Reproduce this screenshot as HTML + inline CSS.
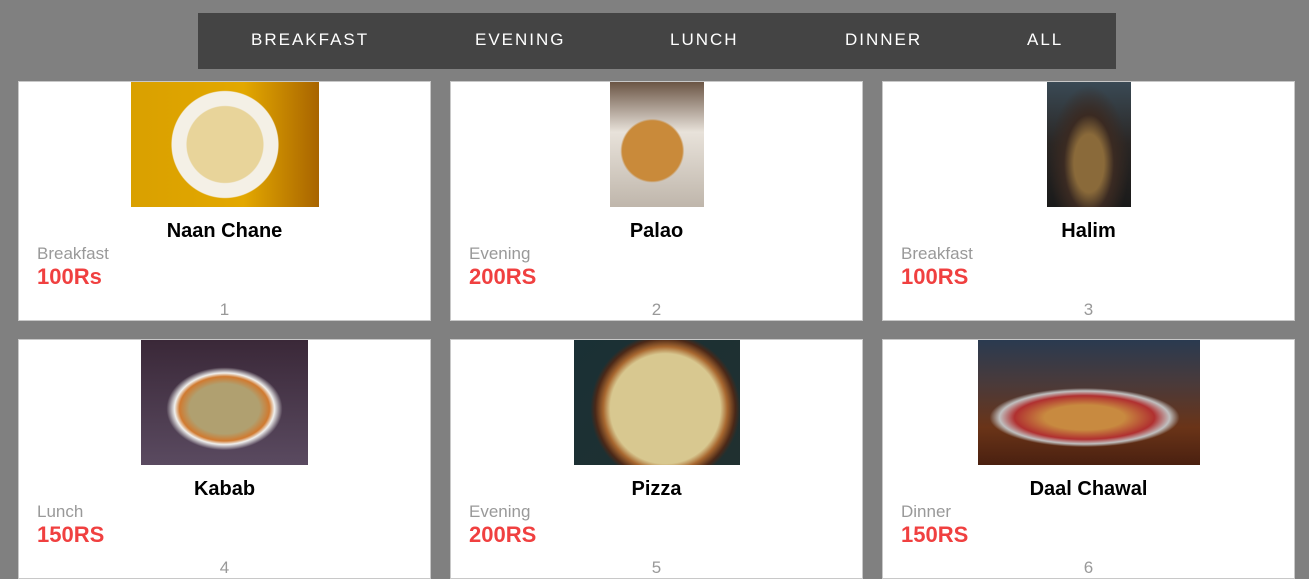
<!DOCTYPE html>
<html><head><style>
body{margin:0;background:#808080;font-family:"Liberation Sans",Arial,sans-serif;width:1309px;height:567px;overflow:hidden;position:relative}
.nav{position:absolute;left:198px;top:13px;width:918px;height:56px;background:#444;color:#fff;font-size:17px;letter-spacing:2px}
.nav span{position:absolute;top:17px}
.card{position:absolute;width:411px;height:238px;background:#fff;border:1px solid #c8c8c8}
.img{position:absolute;top:0;height:125px}
.t{position:absolute;top:138px;width:100%;text-align:center;font-weight:bold;font-size:20px;color:#000}
.c{position:absolute;left:18px;top:162px;font-size:17px;color:#999}
.p{position:absolute;left:18px;top:182px;font-size:22px;font-weight:bold;color:#f04040}
.n{position:absolute;top:218px;width:100%;text-align:center;font-size:17px;color:#999}
</style></head><body>
<div class="nav"><span style="left:53px">BREAKFAST</span><span style="left:277px">EVENING</span><span style="left:472px">LUNCH</span><span style="left:647px">DINNER</span><span style="left:829px">ALL</span></div>

<div class="card" style="left:18px;top:81px">
<div class="img" style="left:112px;width:188px;background:radial-gradient(circle at 50% 50%,#e8d49a 0 38px,#f4f0e6 39px 53px,transparent 54px),linear-gradient(90deg,#d9a000,#e3a800 60%,#a86400)"></div>
<div class="t">Naan Chane</div><div class="c">Breakfast</div><div class="p">100Rs</div><div class="n">1</div></div>

<div class="card" style="left:450px;top:81px">
<div class="img" style="left:159px;width:94px;background:radial-gradient(circle at 45% 55%,#c98a3a 0 30px,transparent 32px),linear-gradient(#6b5545,#e8e2da 40%,#bfb6ab)"></div>
<div class="t">Palao</div><div class="c">Evening</div><div class="p">200RS</div><div class="n">2</div></div>

<div class="card" style="left:882px;top:81px">
<div class="img" style="left:164px;width:84px;background:radial-gradient(ellipse at 50% 65%,#8a6a3a 0 15px,#3a2a22 25px,transparent 40px),linear-gradient(#3a4a55,#2a2624 50%,#1a1a1a)"></div>
<div class="t">Halim</div><div class="c">Breakfast</div><div class="p">100RS</div><div class="n">3</div></div>

<div class="card" style="left:18px;top:339px">
<div class="img" style="left:122px;width:167px;background:radial-gradient(ellipse 70px 50px at 50% 55%,#b0a070 0 35px,#d07a30 45px,#f0f0ee 50px,transparent 58px),linear-gradient(#3a2838,#5a4a60)"></div>
<div class="t">Kabab</div><div class="c">Lunch</div><div class="p">150RS</div><div class="n">4</div></div>

<div class="card" style="left:450px;top:339px">
<div class="img" style="left:123px;width:166px;background:radial-gradient(circle at 55% 55%,#d8c890 0 55px,#a86830 62px,#4a2818 70px,transparent 75px),linear-gradient(135deg,#1a3035,#203030)"></div>
<div class="t">Pizza</div><div class="c">Evening</div><div class="p">200RS</div><div class="n">5</div></div>

<div class="card" style="left:882px;top:339px">
<div class="img" style="left:95px;width:222px;background:radial-gradient(ellipse 90px 28px at 48% 62%,#c88a40 0 40px,#b03030 70px,#c0c0c0 85px,transparent 95px),linear-gradient(#2a3a50,#4a3a3a 35%,#6a3418 70%,#4a2010)"></div>
<div class="t">Daal Chawal</div><div class="c">Dinner</div><div class="p">150RS</div><div class="n">6</div></div>
</body></html>
